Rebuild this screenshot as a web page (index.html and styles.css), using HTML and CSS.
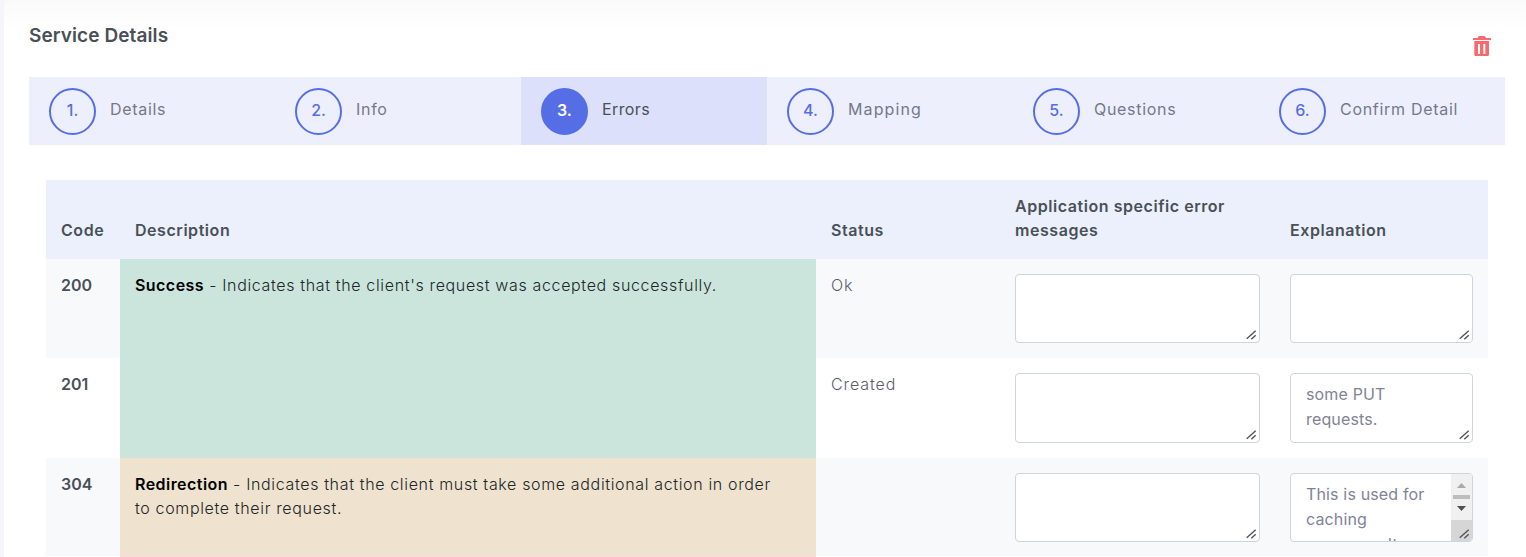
FILE: index.html
```html
<!DOCTYPE html>
<html lang="en">
<head>
<meta charset="utf-8">
<title>Service Details</title>
<link rel="stylesheet" href="styles.css">
</head>
<body>
<main class="card">
  <div class="card-head">
    <h1 class="title">Service Details</h1>
    <button class="trash" aria-label="Delete">
      <svg width="18" height="20" viewBox="0 0 18 20"><path fill="#f96a6e" d="M5.800 0h6l1.400 2H18v2H0V2h4.400zM1.300 5H16v13.500c0 .9-.6 1.500-1.500 1.500H2.800c-.9 0-1.500-.6-1.500-1.500zM5 8v10h2V8zm5.300 0v10h2V8z"/></svg>
    </button>
  </div>
  <ol class="steps">
    <li class="step"><span class="num">1.</span><span class="label">Details</span></li>
    <li class="step"><span class="num">2.</span><span class="label">Info</span></li>
    <li class="step active"><span class="num">3.</span><span class="label">Errors</span></li>
    <li class="step"><span class="num">4.</span><span class="label">Mapping</span></li>
    <li class="step"><span class="num">5.</span><span class="label">Questions</span></li>
    <li class="step"><span class="num">6.</span><span class="label">Confirm Detail</span></li>
  </ol>
  <table class="grid">
    <colgroup><col class="c1"><col class="c2"><col class="c3"><col class="c4"><col class="c5"></colgroup>
    <thead>
      <tr><th>Code</th><th>Description</th><th>Status</th><th>Application specific error messages</th><th>Explanation</th></tr>
    </thead>
    <tbody>
      <tr class="odd r1">
        <td class="code">200</td>
        <td class="desc green" rowspan="2"><b>Success</b> - Indicates that the client's request was accepted successfully.</td>
        <td class="status">Ok</td>
        <td><textarea class="box"></textarea></td>
        <td><textarea class="box"></textarea></td>
      </tr>
      <tr class="r2">
        <td class="code">201</td>
        <td class="status">Created</td>
        <td><textarea class="box tall"></textarea></td>
        <td><textarea class="box tall">some PUT requests.</textarea></td>
      </tr>
      <tr class="odd r3">
        <td class="code">304</td>
        <td class="desc tan"><b>Redirection</b> - Indicates that the client must take some additional action in order to complete their request.</td>
        <td class="status"></td>
        <td><textarea class="box"></textarea></td>
        <td>
          <div class="scrollwrap">
            <textarea class="box clip">This is used for caching purposes. It tells the client that the response has not been modified.</textarea>
            <div class="fakebar" aria-hidden="true">
              <svg width="21" height="46" viewBox="0 0 21 46"><path fill="#a9a9a9" d="M6 14l4.500-5 4.500 5z"/><rect x="2" y="21" width="17" height="4" fill="#bdbdbd"/><path fill="#505050" d="M6 32l4.500 5 4.500-5z"/></svg>
              <svg class="grip" width="21" height="21" viewBox="0 0 21 21"><path stroke="#555" stroke-width="1.400" fill="none" d="M8.700 17.700l9-8M13.300 18.300l4.400-4"/></svg>
            </div>
          </div>
        </td>
      </tr>
      <tr class="pink"><td></td><td class="pinkcell"></td><td></td><td></td><td></td></tr>
    </tbody>
  </table>
</main>
</body>
</html>
```
FILE: styles.css
```css
html, body { margin: 0; height: 557px; overflow: hidden; background: #f5f5fb; }
body { font-family: "Inter", "Open Sans", "Liberation Sans", sans-serif; font-size: 16px; color: #74788d; }
.card { margin-left: 4px; height: 557px; padding: 0 21px 0 25px; background: linear-gradient(#fafafb 0, #fff 30px); box-sizing: border-box; border-top-left-radius: 5px; }
.card-head { display: flex; justify-content: space-between; height: 77px; }
.title { margin: 25px 0 0; font-size: 19px; line-height: 22px; font-weight: 600; color: #495057; letter-spacing: .1px; }
.trash { display: flex; margin: 36px 14px 0 0; padding: 0; width: 18px; height: 20px; border: 0; background: none; }
.steps { display: flex; margin: 0; padding: 0; list-style: none; height: 68px; background: #edf0fc; }
.step { flex: 0 0 246px; display: flex; align-items: center; gap: 14px; padding-left: 20px; box-sizing: border-box; }
.num { flex: none; width: 47px; height: 47px; box-sizing: border-box; display: flex; align-items: center; justify-content: center; padding-bottom: 2px; border: 2px solid #556ee6; border-radius: 50%; color: #556ee6; font-weight: 500; font-size: 16px; }
.label { padding-bottom: 4px; font-size: 16px; letter-spacing: .7px; color: #74788d; }
.step:nth-child(4) .label { letter-spacing: 1.1px; }
.active { background: #dce0fa; }
.active .num { background: #556ee6; color: #fff; font-weight: 600; }
.active .label { color: #495057; letter-spacing: .4px; }
.grid { margin: 35px 0 0 17px; width: 1442px; table-layout: fixed; border-collapse: collapse; }
.c1 { width: 74px; } .c2 { width: 696px; } .c3 { width: 184px; } .c4 { width: 275px; } .c5 { width: 213px; }
th { height: 79px; box-sizing: border-box; padding: 0 15px 17px; vertical-align: bottom; text-align: left; background: #ebf0fc; color: #495057; font-size: 16px; line-height: 24px; font-weight: 600; letter-spacing: .55px; }
td { padding: 15px; vertical-align: top; line-height: 24px; font-size: 16px; color: #74788d; }
.odd td { background: #f8f9fa; }
.r1 { height: 99px; } .r2 { height: 100px; } .r3 { height: 98px; }
.r3 td { padding-bottom: 14px; }
.pink td { height: 10px; padding: 0; background: #fff; }
.pink td.pinkcell { background: #f8dcdc; }
td.code { padding-top: 14px; font-weight: 600; color: #495057; }
td.status { padding-top: 14px; font-weight: 300; color: #5a5d6c; letter-spacing: .9px; }
td.desc { padding: 14px 30px 14px 15px; font-weight: 300; color: #212529; letter-spacing: .65px; }
td.green { background: #cbe5dc; }
.odd td.tan, td.tan { background: #efe3cf; }
b { font-weight: 600; color: #000; letter-spacing: .45px; }
.box { display: block; width: 100%; height: 69px; box-sizing: border-box; margin: 0; padding: 8px 15px; border: 1px solid #ced4da; border-radius: 4px; background: #fff; font: inherit; font-size: 16px; line-height: 25px; letter-spacing: .15px; color: #7f8397; resize: vertical; overflow: auto; }
.box::-webkit-resizer { background: url("data:image/svg+xml,%3Csvg xmlns='http://www.w3.org/2000/svg' width='15' height='15'%3E%3Cpath stroke='%23555' stroke-width='1.400' fill='none' d='M2.700 11.700l9-8M7.300 12.300l4.400-4'/%3E%3C/svg%3E") no-repeat; }
.tall { height: 70px; }
.scrollwrap { position: relative; }
.clip { overflow: hidden; resize: none; padding-right: 42px; }
.fakebar { position: absolute; top: 1px; right: 1px; bottom: 1px; width: 21px; background: #f0f0f0; border-radius: 0 3px 3px 0; overflow: hidden; }
.fakebar svg { display: block; }
.grip { position: absolute; left: 0; bottom: 0; background: #d6d6d6; }
```
